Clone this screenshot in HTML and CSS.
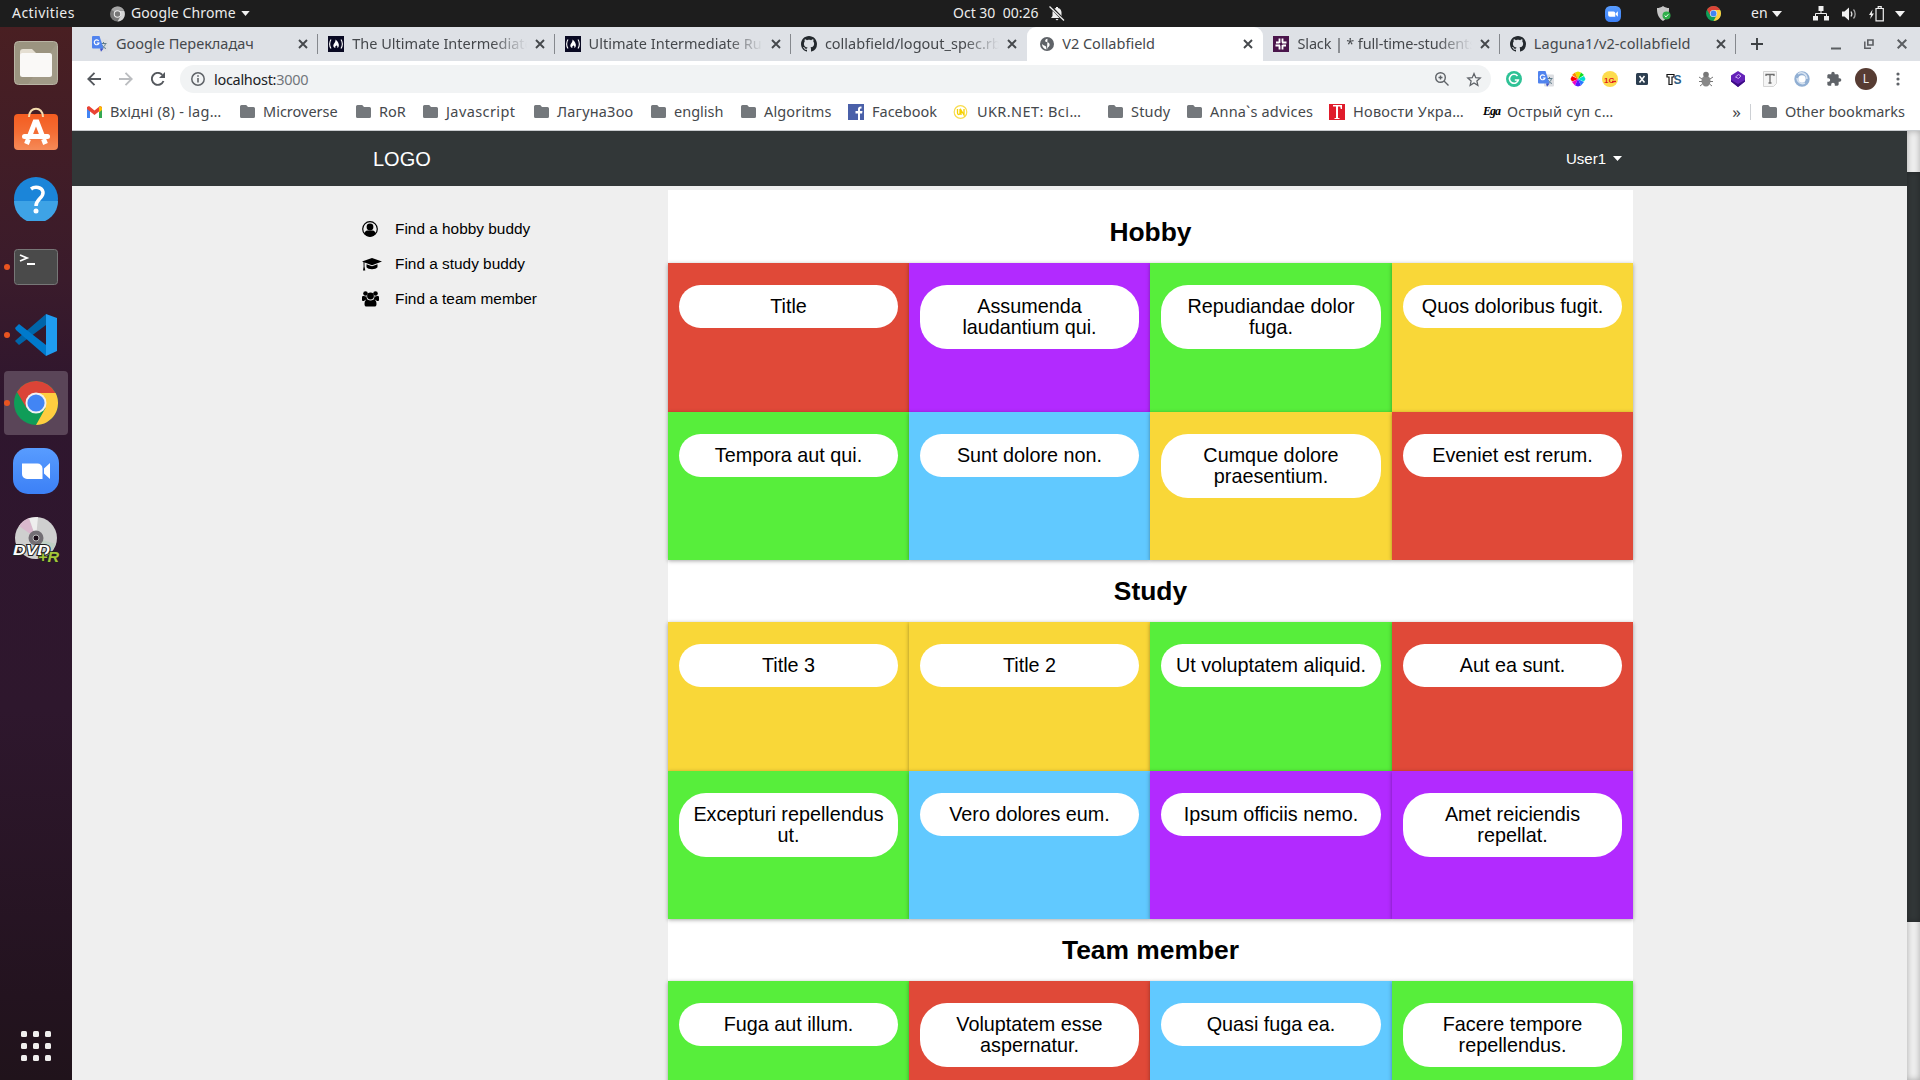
FILE: index.html
```html
<!DOCTYPE html>
<html lang="en">
<head>
<meta charset="utf-8">
<title>V2 Collabfield</title>
<link rel="stylesheet" href="styles.css">
</head>
<body>
<svg class="defs" width="0" height="0" aria-hidden="true">
  <symbol id="folder" viewBox="0 0 15 13"><path d="M1.500 0h4.700l1.800 2h5.500A1.500 1.500 0 0 1 15 3.500v8A1.500 1.500 0 0 1 13.500 13h-12A1.500 1.500 0 0 1 0 11.500v-10A1.500 1.500 0 0 1 1.500 0z" fill="#74787c"/></symbol>
  <symbol id="close" viewBox="0 0 10 10"><path d="M1 1l8 8M9 1L1 9" stroke="#45484c" stroke-width="1.900" fill="none"/></symbol>
  <symbol id="caret" viewBox="0 0 10 6"><path d="M0 0h10L5 6z" fill="#f2f2f2"/></symbol>
  <symbol id="github" viewBox="0 0 16 16"><path fill="#24292e" d="M8 0C3.580 0 0 3.580 0 8c0 3.540 2.290 6.530 5.470 7.590.4.070.55-.17.55-.38 0-.19-.01-.82-.01-1.490-2.010.37-2.530-.49-2.690-.94-.09-.23-.48-.94-.82-1.130-.28-.15-.68-.52-.01-.53.63-.01 1.080.58 1.230.82.72 1.210 1.870.87 2.330.66.07-.52.28-.87.51-1.070-1.780-.2-3.640-.89-3.640-3.950 0-.87.31-1.590.82-2.150-.08-.2-.36-1.020.08-2.120 0 0 .67-.21 2.200.82.64-.18 1.320-.27 2-.27s1.360.09 2 .27c1.530-1.040 2.200-.82 2.200-.82.44 1.100.16 1.920.08 2.120.51.56.82 1.270.82 2.150 0 3.070-1.870 3.750-3.650 3.950.29.25.54.73.54 1.480 0 1.070-.01 1.930-.01 2.200 0 .21.15.46.55.38A8.010 8.010 0 0 0 16 8c0-4.420-3.580-8-8-8z"/></symbol>
  <symbol id="translate" viewBox="0 0 16 16"><rect x="6" y="3.500" width="10" height="12" rx="1" fill="#dcdee2"/><path d="M8.500 7.500h6M11.500 6v1.500M13.500 7.500c-.5 2.500-2 4-4 5M10 9c1 2 2.500 3 4 3.500" stroke="#607d8b" fill="none"/><path d="M1 0h6.500l4 12.500H1a1 1 0 0 1-1-1V1a1 1 0 0 1 1-1z" fill="#5083ee"/><path d="M8 12.500h3.500L9 15.700z" fill="#3c50c8"/><path d="M6.700 5A2.400 2.400 0 1 0 7 7H4.800" stroke="#fff" stroke-width="1.200" fill="none"/></symbol>
  <symbol id="fcc" viewBox="0 0 16 16"><rect width="16" height="16" fill="#0a0a23"/><path d="M3 3.500C1.200 6 1.200 10 3 12.500M13 3.500c1.800 2.500 1.800 6.500 0 9" stroke="#fff" stroke-width="1.100" fill="none"/><path d="M7.500 3.500c2.500 2 3.700 4.500 3.300 6.500-.2 1.100-.7 1.700-1.500 2 .4-1.500-.1-2.300-.8-2.800-.2 1-.9.700-1.200 1.200-.2.600 0 1.100.2 1.600C5.300 11.500 4.800 9.500 5.800 8c1-1.400 1.900-2.500 1.700-4.500z" fill="#fff"/></symbol>
  <symbol id="chrome" viewBox="0 0 44 44"><circle cx="22" cy="22" r="22" fill="#0f9d58"/><path d="M22 12h19.600A22 22 0 0 1 22 44l9.500-17z" fill="#ffcd40"/><path d="M3 11A22 22 0 0 1 41.600 12H22L12.500 27z" fill="#db4437"/><circle cx="22" cy="22" r="10.500" fill="#f1f1f1"/><circle cx="22" cy="22" r="8.600" fill="#4285f4"/></symbol>
  <symbol id="zoomapp" viewBox="0 0 46 46"><linearGradient id="zg" x2="0" y2="1"><stop stop-color="#589cff"/><stop offset="1" stop-color="#3c80f6"/></linearGradient><rect width="46" height="46" rx="15" fill="url(#zg)"/><path d="M9 15.500h15.500a5 5 0 0 1 5 5V31H14a5 5 0 0 1-5-5zM31 20.500l6-5.500v16l-6-5.500z" fill="#fff"/></symbol>
</svg>

<header class="topbar">
  <div class="top-left">
    <span class="activities">Activities</span>
    <svg class="top-chrome" width="15" height="16" viewBox="0 0 16 16"><circle cx="8" cy="8" r="8" fill="#777"/><path d="M8 8L1.500 3.500A8 8 0 0 1 15 4H8z" fill="#a5a5a5"/><path d="M8 4.500h7A8 8 0 0 1 8 16l3.500-6z" fill="#d5d5d5"/><circle cx="8" cy="8" r="4" fill="#eee"/><circle cx="8" cy="8" r="2.900" fill="#777"/></svg>
    <span class="appname">Google Chrome</span>
    <svg class="app-caret" width="9" height="5"><use href="#caret"/></svg>
  </div>
  <div class="clock"><span>Oct 30&nbsp; 00:26</span>
    <svg width="16" height="15" viewBox="0 0 16 15"><path d="M2 12l1.500-2V6.500C3.500 4 5 2.200 7 2V1h2v1c2.200.4 3.500 2.200 3.500 4.500V10l1.500 2zM6.500 13h3L8 14.500z" fill="#eee"/><path d="M1 0l14 14.500" stroke="#1d1d1d" stroke-width="3"/><path d="M.5.5L15 14.500" stroke="#eee" stroke-width="1.300"/></svg>
  </div>
  <div class="tray">
    <svg class="t-zoom" width="16" height="16"><use href="#zoomapp"/></svg>
    <svg class="t-shield" width="14" height="16" viewBox="0 0 14 16"><path d="M6 0c2 1.500 4 2 6 2 .2 6-1.500 10-6 13C1.500 12-.2 8 0 2c2 0 4-.5 6-2z" fill="#c5c5c5"/><circle cx="9.500" cy="9.500" r="4" fill="#2fae4a"/><path d="M7.600 9.500l1.400 1.400 2.300-2.600" stroke="#fff" fill="none"/></svg>
    <svg class="t-chrome" width="15" height="15"><use href="#chrome"/></svg>
    <span class="lang">en</span>
    <svg class="t-caret" width="10" height="6"><use href="#caret"/></svg>
    <svg class="t-net" width="16" height="15" viewBox="0 0 16 15"><path d="M5.500 0h5v5h-5zM0 10h5v4.500H0zM11 10h5v4.500h-5z" fill="#f0f0f0"/><path d="M8 4v3.500M2.500 11V7.500h11V11" stroke="#f0f0f0" fill="none"/></svg>
    <svg class="t-vol" width="15" height="14" viewBox="0 0 15 14"><path d="M0 4.500h2.500L7 .5v13l-4.500-4H0z" fill="#f0f0f0"/><path d="M9 4.500c1 1.500 1 3.500 0 5" stroke="#e0e0e0" stroke-width="1.300" fill="none"/><path d="M11.500 2.500c2.200 2.500 2.200 6.500 0 9" stroke="#aaa" stroke-width="1.300" fill="none"/></svg>
    <svg class="t-bat" width="15" height="16" viewBox="0 0 15 16"><path d="M3.500 3.500L0 9h2l-.8 4L5 7.500H2.800z" fill="#f0f0f0"/><path d="M7 2.500h7.300v12.300H7zM9.200 2V.7h3V2" stroke="#f0f0f0" stroke-width="1.200" fill="none"/></svg>
    <svg class="t-end" width="10" height="6"><use href="#caret"/></svg>
  </div>
</header>

<div class="desktop">
  <nav class="dock">
    <div class="app"><svg width="44" height="44" viewBox="0 0 44 44"><rect x=".5" y=".5" width="43" height="43" rx="4" fill="#9b9480" stroke="#b9b4a4"/><path d="M43 2v41H14z" fill="#aaa390" opacity=".4"/><path d="M6 11a3 3 0 0 1 3-3h9l4 4v6H6z" fill="#e5dfd2"/><rect x="6" y="12" width="32" height="24" rx="2.500" fill="#faf9f7"/></svg></div>
    <div class="app bag"><svg width="44" height="44" viewBox="0 0 44 44"><linearGradient id="bg" x2="0" y2="1"><stop stop-color="#f45c20"/><stop offset=".5" stop-color="#f46d34"/><stop offset="1" stop-color="#f58a58"/></linearGradient><rect y="7" width="44" height="36" rx="4" fill="url(#bg)"/><path d="M15 10c0-11 14-11 14 0" stroke="#f4dcae" stroke-width="2" fill="none"/><path d="M12.500 37l2-5M31.500 37l-2-5M16 28l5-13h2l5 13" stroke="#fff" stroke-width="5" fill="none"/><rect x="8" y="27" width="28" height="5" rx="2.500" fill="#fff"/></svg></div>
    <div class="app"><svg width="44" height="44" viewBox="0 0 44 44"><circle cx="22" cy="22" r="22" fill="#1b85d9"/><path d="M0 24h44A22 22 0 0 1 0 24z" fill="#3ea3e6"/><path d="M17 12c4-3 11-2 12 3 .8 6-7 7-7 14" stroke="#fff" stroke-width="3.500" fill="none"/><circle cx="22" cy="34" r="2.500" fill="#fff"/></svg></div>
    <div class="app running"><svg width="44" height="36" viewBox="0 0 44 36"><rect x=".5" y=".5" width="43" height="35" rx="3" fill="#4a4a4a" stroke="#777"/><path d="M6 6l7 3-7 3M13 15h8" stroke="#fff" stroke-width="1.800" fill="none"/></svg></div>
    <div class="app running"><svg width="44" height="44" viewBox="0 0 44 44"><path d="M1 28l4 4 27-20V1L2 27z" fill="#0065a9"/><path d="M1 15l4-4 27 21v11L2 17z" fill="#007acc"/><path d="M32 1l11 4v33l-11 5z" fill="#1f9cf0"/></svg></div>
    <div class="app running current"><svg width="44" height="44"><use href="#chrome"/></svg></div>
    <div class="app"><svg width="46" height="46"><use href="#zoomapp"/></svg></div>
    <div class="app"><svg width="48" height="48" viewBox="0 0 48 48"><circle cx="24" cy="23" r="21" fill="#cfcfcf"/><path d="M24 23L7 11A21 21 0 0 1 17 3z" fill="#d9b8cd"/><path d="M24 23L17 3l9-1z" fill="#eee"/><path d="M24 23l20 6-7 11z" fill="#c0d0c4"/><circle cx="24" cy="23" r="7.500" fill="#736e74"/><circle cx="24" cy="23" r="3" fill="#1b0d18" stroke="#bbb"/><text x="1" y="40" class="dvd" textLength="37" lengthAdjust="spacingAndGlyphs">DVD</text><text x="26" y="47" class="plusr" textLength="21" lengthAdjust="spacingAndGlyphs">+R</text></svg></div>
    <div class="apps-grid"><i></i><i></i><i></i><i></i><i></i><i></i><i></i><i></i><i></i></div>
  </nav>

  <section class="browser">
    <div class="tabs">
      <div class="tab"><svg class="fav" width="16" height="16"><use href="#translate"/></svg><span class="tab-title t1">Google Перекладач</span><svg class="x" width="10" height="10"><use href="#close"/></svg></div>
      <div class="tab"><svg class="fav" width="16" height="16"><use href="#fcc"/></svg><span class="tab-title fade t2">The Ultimate Intermediate</span><svg class="x" width="10" height="10"><use href="#close"/></svg></div>
      <div class="tab"><svg class="fav" width="16" height="16"><use href="#fcc"/></svg><span class="tab-title fade t3">Ultimate Intermediate Ruby</span><svg class="x" width="10" height="10"><use href="#close"/></svg></div>
      <div class="tab noline"><svg class="fav" width="16" height="16"><use href="#github"/></svg><span class="tab-title fade t4">collabfield/logout_spec.rb</span><svg class="x" width="10" height="10"><use href="#close"/></svg></div>
      <div class="tab active"><svg class="fav globe" width="14" height="14" viewBox="0 0 14 14"><circle cx="7" cy="7" r="7" fill="#5f6368"/><path d="M7.500 1.800C6 2 5 3 5.200 4.200c.3 1 2 .8 3 1.300 1.200.6 1.800 1.800 1.200 3.200-.5 1.200-1.500 1.300-2 2.300-.2.600 0 1.200-.4 1.400C6 12 6.500 10.500 6 9.500 5.300 8.500 3.500 8.500 2 7c0 3 2.200 5.300 5 5.300" fill="#fff"/></svg><span class="tab-title t5">V2 Collabfield</span><svg class="x" width="10" height="10"><use href="#close"/></svg></div>
      <div class="tab"><svg class="fav" width="16" height="16" viewBox="0 0 16 16"><rect width="16" height="16" fill="#4a154b"/><path d="M6.500 2.500V7M9.500 9v4.500M2.500 9.500H7M9 6.500h4.500M3 6.500h3.500M9.500 9.500H13M9.500 2.500v4M6.500 9.500v4" stroke="#fff" stroke-width="1.800" fill="none"/></svg><span class="tab-title fade t6">Slack | * full-time-students</span><svg class="x" width="10" height="10"><use href="#close"/></svg></div>
      <div class="tab"><svg class="fav" width="16" height="16"><use href="#github"/></svg><span class="tab-title t7">Laguna1/v2-collabfield</span><svg class="x" width="10" height="10"><use href="#close"/></svg></div>
      <svg class="newtab" width="12" height="12" viewBox="0 0 12 12"><path d="M6 0v12M0 6h12" stroke="#3c4043" stroke-width="1.900"/></svg>
      <div class="winbtns">
        <svg width="10" height="12" viewBox="0 0 10 12"><path d="M0 10.500h10" stroke="#5b5e62" stroke-width="2"/></svg>
        <svg width="10" height="10" viewBox="0 0 10 10"><path d="M3.800 1h5.200v5H3.800z" stroke="#5b5e62" stroke-width="1.600" fill="none"/><path d="M.8 2.500v6.700H7" stroke="#5b5e62" stroke-width="1.500" fill="none"/></svg>
        <svg width="10" height="10" viewBox="0 0 10 10"><path d="M.7.7l8.600 8.600M9.300.7L.7 9.300" stroke="#5b5e62" stroke-width="2"/></svg>
      </div>
    </div>

    <div class="toolbar">
      <div class="navbtns">
        <svg width="14" height="14" viewBox="0 0 14 14"><path d="M14 7H1.500M7.500 .8L1.300 7l6.200 6.200" stroke="#54585d" stroke-width="1.900" fill="none"/></svg>
        <svg width="14" height="14" viewBox="0 0 14 14"><path d="M0 7h12.500M6.500 .8L12.700 7l-6.200 6.200" stroke="#bbbdc0" stroke-width="1.900" fill="none"/></svg>
        <svg width="14" height="14" viewBox="0 0 14 14"><path d="M12.500 9A6 6 0 1 1 11.300 2.800" stroke="#54585d" stroke-width="1.900" fill="none"/><path d="M14 0v6H8z" fill="#54585d"/></svg>
      </div>
      <div class="omnibox">
        <svg width="14" height="14" viewBox="0 0 14 14"><circle cx="7" cy="7" r="6.200" stroke="#5f6368" stroke-width="1.500" fill="none"/><path d="M7 6v4.500M7 3.300v1.500" stroke="#5f6368" stroke-width="1.600"/></svg>
        <span class="url">localhost:<em>3000</em></span>
        <svg class="mag" width="14" height="14" viewBox="0 0 14 14"><circle cx="5.500" cy="5.500" r="4.800" stroke="#5f6368" stroke-width="1.400" fill="none"/><path d="M9 9l4.500 4.500M5.500 3.500v4M3.500 5.500h4" stroke="#5f6368" stroke-width="1.400"/></svg>
        <svg width="16" height="15" viewBox="0 0 24 24"><path d="M12 2.500l2.800 6.600 7.200.6-5.400 4.700 1.600 7-6.200-3.700-6.200 3.700 1.600-7L2 9.700l7.200-.6z" stroke="#5f6368" stroke-width="2" fill="none"/></svg>
      </div>
      <div class="exts">
        <svg viewBox="0 0 16 16"><circle cx="8" cy="8" r="8" fill="#2fc296"/><path d="M11.500 5A4.500 4.500 0 1 0 12.300 9H8.800" stroke="#fff" stroke-width="1.600" fill="none"/></svg>
        <svg><use href="#translate"/></svg>
        <svg viewBox="0 0 16 16"><path d="M8 8L5 1.500 8 .5l3 1z" fill="#e8e000"/><path d="M8 8L5 1.500 2 4z" fill="#ff8a00"/><path d="M8 8L2 5 .5 8 2 10.500z" fill="#f00"/><path d="M8 8l-6 3 3 3.500z" fill="#f000c8"/><path d="M8 8l-3 6.500 3 1 3-1z" fill="#5a18ff"/><path d="M8 8l3 6.500 3-3.500z" fill="#2878ff"/><path d="M8 8l6 2.500L15.500 8 14 5z" fill="#00e0d0"/><path d="M8 8l6-4-3-2.500z" fill="#10dc20"/></svg>
        <svg viewBox="0 0 16 16"><circle cx="8" cy="8" r="8" fill="#fddc4d"/><text x="2" y="11.500" class="onec">1C</text><path d="M10 10.500h4" stroke="#e02020" stroke-width="1.400"/></svg>
        <svg viewBox="0 0 16 16"><rect x="2" y="2" width="12" height="12" rx="1.500" fill="#2c3e50"/><path d="M5.500 5l5 6.500M10.500 5l-5 6.500" stroke="#fff" stroke-width="1.500"/></svg>
        <svg viewBox="0 0 16 16"><path d="M1 3.500h7v2.500H6v7.500H3V6H1z" fill="#fff" stroke="#111" stroke-width="1.200"/><text x="7.500" y="13" class="ts">S</text></svg>
        <svg viewBox="0 0 16 16"><ellipse cx="8" cy="10" rx="4.500" ry="5.500" fill="#888"/><circle cx="8" cy="3.500" r="2.800" fill="#777"/><path d="M1 6l3 2M15 6l-3 2M1 10.500h3M15 10.500h-3M2 15l2.500-2M14 15l-2.500-2" stroke="#777"/></svg>
        <svg viewBox="0 0 16 16"><path d="M8 0l7 4.500v6L8 16l-7-5.500v-6z" fill="#6422b8"/><path d="M1 9l7 4 7-4v1.500L8 16l-7-5.500z" fill="#3d0d84"/><path d="M5.500 6l3-2.500 2.500 1.500-2.500 2.500z" fill="none" stroke="#c8a6f0"/></svg>
        <svg viewBox="0 0 16 16"><path d="M1.500.5h13v12l-3 3h-10z" fill="#f5f5f5" stroke="#d5d5d5"/><path d="M4 5V3.500h8V5M8 3.500V12M6.500 12h3" stroke="#6d6d6d" stroke-width="1.300" fill="none"/></svg>
        <svg viewBox="0 0 16 16"><circle cx="8" cy="8" r="5.700" stroke="#91afd3" stroke-width="4" fill="none"/><path d="M4 3c4-3 9 0 9 5M3 7c0 4 4 7 8 5" stroke="#d6e2f0" stroke-width="1.500" fill="none"/></svg>
        <svg viewBox="0 0 24 24"><path d="M20.500 11H19V7c0-1.100-.9-2-2-2h-4V3.500a2.500 2.500 0 0 0-5 0V5H4c-1.100 0-2 .9-2 2v3.800h1.500c1.500 0 2.700 1.200 2.700 2.700S5 16.200 3.500 16.200H2V20c0 1.100.9 2 2 2h3.800v-1.500c0-1.500 1.200-2.700 2.700-2.700s2.700 1.200 2.700 2.700V22H17c1.100 0 2-.9 2-2v-4h1.500a2.500 2.500 0 0 0 0-5z" fill="#5f6368"/></svg>
        <span class="avatar">L</span>
        <svg viewBox="0 0 16 16"><path d="M8 3v.01M8 8v.01M8 13v.01" stroke="#5f6368" stroke-width="3.200" stroke-linecap="round"/></svg>
      </div>
    </div>

    <div class="bookmarks">
      <div class="bm b1"><svg width="15" height="12" viewBox="0 0 15 12"><path d="M0 2v10h3V4z" fill="#4285f4"/><path d="M15 2v10h-3V4z" fill="#34a853"/><path d="M0 1l2-1 5.500 4.500L13 0l2 1v2L7.500 9 0 3z" fill="#ea4335"/><path d="M12 1l1.500-1L15 1.500V4l-3 2.500z" fill="#fbbc04"/></svg><span>Вхідні (8) - lag…</span></div>
      <div class="bm b2"><svg width="15" height="13"><use href="#folder"/></svg><span>Microverse</span></div>
      <div class="bm b3"><svg width="15" height="13"><use href="#folder"/></svg><span>RoR</span></div>
      <div class="bm b4"><svg width="15" height="13"><use href="#folder"/></svg><span>Javascript</span></div>
      <div class="bm b5"><svg width="15" height="13"><use href="#folder"/></svg><span>ЛагунаЗоо</span></div>
      <div class="bm b6"><svg width="15" height="13"><use href="#folder"/></svg><span>english</span></div>
      <div class="bm b7"><svg width="15" height="13"><use href="#folder"/></svg><span>Algoritms</span></div>
      <div class="bm b8"><svg width="16" height="16" viewBox="0 0 16 16"><rect width="16" height="16" fill="#4a60a9"/><path d="M10 16V9.500H7.500V7H10V5c0-2 1.500-2.800 3.500-2.500v2c-1.300 0-1.500.3-1.500 1V7h2.500l-.4 2.500H12V16z" fill="#fff"/></svg><span>Facebook</span></div>
      <div class="bm b9"><svg width="16" height="16" viewBox="0 0 16 16"><circle cx="7.500" cy="8" r="6.300" stroke="#f8dc4c" stroke-width="1.200" fill="none"/><path d="M4.500 5v4c0 2 2.500 2 2.500 0V5M8 11V6l3 5V5" stroke="#f6d000" stroke-width="1.300" fill="none"/></svg><span>UKR.NET: Всі…</span></div>
      <div class="bm b10"><svg width="15" height="13"><use href="#folder"/></svg><span>Study</span></div>
      <div class="bm b11"><svg width="15" height="13"><use href="#folder"/></svg><span>Anna`s advices</span></div>
      <div class="bm b12"><svg width="16" height="16" viewBox="0 0 16 16"><rect width="16" height="16" fill="#e01b2b"/><path d="M4 1h9v4h-1.200l-.6-2.500H9V14h1.500v1h-5v-1H7V2.500H4z" fill="#fff"/></svg><span>Новости Укра…</span></div>
      <div class="bm b13"><b class="ega">Ega</b><span>Острый суп с…</span></div>
      <span class="more">»</span>
      <div class="bm other"><svg width="15" height="13"><use href="#folder"/></svg><span>Other bookmarks</span></div>
    </div>

    <div class="viewport">
      <div class="page">
        <div class="navbar"><a class="brand">LOGO</a><a class="user">User1<svg width="9" height="5" viewBox="0 0 9 5"><path d="M0 0h9L4.500 5z" fill="#fff"/></svg></a></div>
        <div class="main">
          <aside class="side">
            <a><svg width="16" height="16" viewBox="0 0 16 16"><circle cx="8" cy="8" r="7.300" fill="none" stroke="#000" stroke-width="1.200"/><circle cx="8" cy="6" r="3.400"/><path d="M2 12.500c1-2.500 3-3 3.500-3h5c.5 0 2.500.5 3.500 3A7.500 7.500 0 0 1 2 12.500z"/></svg>Find a hobby buddy</a>
            <a><svg width="20" height="16" viewBox="0 0 20 16"><path d="M0 5.500L10 2l10 3.500L10 9.300z"/><path d="M4.500 8.200L10 10.300l5.500-2.100v3c-1.500 2.600-9.500 2.600-11 0zM1.500 6h1v4.500l.8 4H1l.6-4z"/></svg>Find a study buddy</a>
            <a><svg width="17" height="16" viewBox="0 0 17 16"><circle cx="3.500" cy="2.500" r="2.300"/><circle cx="13.500" cy="2.500" r="2.300"/><circle cx="8.500" cy="5" r="3.400"/><path d="M0 9V6.500C0 5 1 4.700 2 5c1 .6 2 .5 2.500.3 0 1.500.5 2.700 1.200 3.400H4C3 9 2 10 1.500 10S0 10 0 9zM17 9V6.500C17 5 16 4.700 15 5c-1 .6-2 .5-2.500.3 0 1.500-.5 2.700-1.200 3.400H13c1 .3 2 1.300 2.500 1.300S17 10 17 9zM2.500 13c0-3 1-4.500 3-4.500 2 1.200 4 1.200 6 0 2 0 3 1.500 3 4.500 0 2-.8 2.500-2 2.500h-8c-1.200 0-2-.5-2-2.500z"/></svg>Find a team member</a>
          </aside>
          <div class="content">
            <h2 class="first">Hobby</h2>
            <div class="cards">
              <div class="card red"><span>Title</span></div>
              <div class="card purple"><span>Assumenda laudantium qui.</span></div>
              <div class="card green"><span>Repudiandae dolor fuga.</span></div>
              <div class="card yellow"><span>Quos doloribus fugit.</span></div>
              <div class="card green"><span>Tempora aut qui.</span></div>
              <div class="card blue"><span>Sunt dolore non.</span></div>
              <div class="card yellow"><span>Cumque dolore praesentium.</span></div>
              <div class="card red"><span>Eveniet est rerum.</span></div>
            </div>
            <h2>Study</h2>
            <div class="cards">
              <div class="card yellow"><span>Title 3</span></div>
              <div class="card yellow"><span>Title 2</span></div>
              <div class="card green"><span>Ut voluptatem aliquid.</span></div>
              <div class="card red"><span>Aut ea sunt.</span></div>
              <div class="card green"><span>Excepturi repellendus ut.</span></div>
              <div class="card blue"><span>Vero dolores eum.</span></div>
              <div class="card purple"><span>Ipsum officiis nemo.</span></div>
              <div class="card purple"><span>Amet reiciendis repellat.</span></div>
            </div>
            <h2>Team member</h2>
            <div class="cards">
              <div class="card green"><span>Fuga aut illum.</span></div>
              <div class="card red"><span>Voluptatem esse aspernatur.</span></div>
              <div class="card blue"><span>Quasi fuga ea.</span></div>
              <div class="card green"><span>Facere tempore repellendus.</span></div>
            </div>
          </div>
        </div>
      </div>
      <div class="scrollbar"><div class="thumb"></div></div>
    </div>
  </section>
</div>
</body>
</html>
```
FILE: styles.css
```css
* { box-sizing: border-box; }
body {
  margin: 0;
  width: 1920px;
  height: 1080px;
  overflow: hidden;
  display: flex;
  flex-direction: column;
  font-family: "Noto Sans", "Open Sans", sans-serif;
  font-size: 14.5px;
}
svg { display: block; flex: none; }
.defs { position: absolute; }

/* GNOME top bar */
.topbar {
  height: 27px;
  flex: none;
  background: #1d1d1d;
  color: #ececec;
  display: flex;
  align-items: center;
  font-size: 14px;
  line-height: 26px;
  white-space: nowrap;
}
.topbar span { padding-bottom: 1px; }
.top-left { width: 953px; display: flex; align-items: center; padding-left: 12px; }
.activities { width: 98px; letter-spacing: .45px; }
.appname { margin-left: 6px; width: 110px; letter-spacing: .1px; }
.clock { display: flex; align-items: center; gap: 9px; }
.clock span { width: 87px; }
.tray { margin-left: auto; display: flex; align-items: center; padding-right: 15px; }
.t-shield { margin-left: 36px; }
.t-chrome { margin-left: 35px; }
.lang { margin-left: 30px; width: 21px; }
.t-net { margin-left: 31px; }
.t-vol { margin-left: 13px; }
.t-bat { margin-left: 12px; }
.t-end { margin-left: 11px; }

.desktop { flex: 1; display: flex; min-height: 0; }

/* Dock */
.dock {
  width: 72px;
  flex: none;
  display: flex;
  flex-direction: column;
  align-items: center;
  gap: 4px;
  padding: 4px 0 18px;
  background: linear-gradient(#491f22, #3a1b2b 24%, #2f162e 35%, #2e172d 65%, #23131f 92%, #20131b);
}
.app {
  position: relative;
  width: 64px;
  height: 64px;
  border-radius: 4px;
  display: flex;
  align-items: center;
  justify-content: center;
}
.bag { padding-bottom: 5px; }
.current { background: #5a4558; }
.running::before {
  content: "";
  position: absolute;
  left: 0;
  top: 29px;
  width: 6px;
  height: 6px;
  border-radius: 50%;
  background: #e95420;
}
.dvd { font: italic bold 15px "Liberation Sans", sans-serif; fill: #fff; stroke: #222; stroke-width: 2px; paint-order: stroke; }
.plusr { font: italic bold 15px "Liberation Sans", sans-serif; fill: #a4c639; stroke: #222; stroke-width: 1.5px; paint-order: stroke; }
.apps-grid { margin-top: auto; margin-bottom: 1px; display: grid; grid-template-columns: repeat(3, 6px); gap: 6px; }
.apps-grid i { width: 6px; height: 6px; border-radius: 1.5px; background: #f0efee; }

/* Browser */
.browser { flex: 1; min-width: 0; display: flex; flex-direction: column; background: #fff; color: #45484c; }
.tabs { height: 34px; background: #dee1e6; display: flex; align-items: center; padding-left: 10px; }
.tab {
  width: 236.3px;
  height: 34px;
  padding: 0 10px 0 10px;
  display: flex;
  align-items: center;
  position: relative;
}
.tab::after { content: ""; position: absolute; right: 0; top: 7px; width: 1px; height: 20px; background: #85888d; }
.tab.noline::after, .tab.active::after { display: none; }
.tab-title { flex: 1; margin: 0 8px; padding-bottom: 2px; white-space: nowrap; overflow: hidden; line-height: 24px; }
.fade { -webkit-mask-image: linear-gradient(90deg, #000 80%, transparent); mask-image: linear-gradient(90deg, #000 80%, transparent); }
.t6 { letter-spacing: -.15px; }
.t7 { letter-spacing: .1px; }
.active { background: #fff; border-radius: 9px 9px 0 0; padding-left: 12px; }
.globe { margin-left: 1px; }
.newtab { margin-left: 15px; }
.winbtns { margin-left: auto; margin-right: 13px; display: flex; align-items: center; gap: 23px; }

.toolbar { height: 36px; display: flex; align-items: center; }
.navbtns { width: 108px; display: flex; gap: 18px; padding-left: 15px; }
.omnibox {
  width: 1311px;
  height: 28px;
  border-radius: 14px;
  background: #f1f3f4;
  display: flex;
  align-items: center;
  padding: 0 9px 0 11px;
}
.url { margin-left: 9px; padding-bottom: 1px; color: #202124; letter-spacing: -.3px; }
.url em { font-style: normal; color: #72767b; }
.mag { margin-left: auto; margin-right: 17px; }
.exts { display: flex; align-items: center; gap: 16px; padding-left: 15px; }
.exts svg { width: 16px; height: 16px; }
.avatar {
  width: 22px;
  height: 22px;
  margin: 0 -3px;
  border-radius: 50%;
  background: #573c33;
  color: #eee;
  font-size: 12px;
  line-height: 22px;
  text-align: center;
}
.onec { font: bold 8px "Liberation Sans", sans-serif; fill: #e02020; }
.ts { font: bold 12px "Liberation Sans", sans-serif; fill: #2f5f86; }

.bookmarks {
  height: 34px;
  flex: none;
  display: flex;
  align-items: center;
  padding: 0 15px 4px;
  border-bottom: 1px solid #c9cccf;
  white-space: nowrap;
}
.bm { display: flex; align-items: center; gap: 8px; line-height: 24px; flex: none; }
.bm span { padding-bottom: 2px; }
.b1 { width: 153px; letter-spacing: .25px; }
.b2 { width: 116px; }
.b3 { width: 67px; }
.b4 { width: 111px; letter-spacing: .4px; }
.b5 { width: 117px; letter-spacing: .2px; }
.b6 { width: 90px; }
.b7 { width: 107px; letter-spacing: .15px; }
.b8 { width: 105px; }
.b9 { width: 155px; letter-spacing: .4px; }
.b10 { width: 79px; letter-spacing: .2px; }
.b11 { width: 142px; letter-spacing: .2px; }
.b12 { width: 154px; letter-spacing: .25px; }
.b13 { letter-spacing: .25px; }
.ega { font: italic bold 12px "Liberation Serif", serif; color: #000; width: 16px; letter-spacing: -1px; }
.more { margin-left: auto; padding-right: 9px; font-size: 17px; line-height: 20px; }
.other { border-left: 1px solid #cdd0d4; padding-left: 11px; height: 16px; }

/* Web page */
.viewport { flex: 1; min-height: 0; display: flex; font-family: "Liberation Sans", Arial, sans-serif; }
.page { flex: 1; background: #efefef; color: #000; overflow: hidden; }
.navbar {
  height: 55px;
  background: #323738;
  color: #fff;
  display: flex;
  align-items: center;
  justify-content: space-between;
  padding: 0 285px 0 301px;
}
.brand { font-size: 20px; padding-top: 1px; }
.user { font-size: 15px; display: flex; align-items: center; gap: 7px; }
.main { display: flex; padding-top: 4px; }
.side { width: 596px; padding: 21px 0 0 290px; flex: none; }
.side a { display: grid; grid-template-columns: 33px auto; align-items: center; height: 35px; font-size: 15.4px; }
.content { width: 965px; background: #fff; }
h2 { margin: 0; height: 62px; line-height: 62px; font-size: 26.4px; text-align: center; }
h2.first { height: 73px; line-height: 84px; }
.cards { display: grid; grid-template-columns: 241px 241px 242px 241px; grid-auto-rows: 149px 148px; }
.card { padding: 22px 11px; box-shadow: 0 1px 4px rgba(0, 0, 0, .35); }
.card span {
  display: block;
  background: #fff;
  border-radius: 27px;
  padding: 11px;
  font-size: 19.8px;
  line-height: 21.200px;
  text-align: center;
}
.red { background: #e04938; }
.purple { background: #b22aff; }
.green { background: #57ee3b; }
.yellow { background: #f9d738; }
.blue { background: #61c9ff; }

.scrollbar { width: 13px; background: #efefef; box-shadow: inset 0 0 6px rgba(0, 0, 0, .3); padding-top: 41px; }
.thumb { height: 750px; background: #323738; box-shadow: inset 0 0 6px rgba(0, 0, 0, .3); }
```
